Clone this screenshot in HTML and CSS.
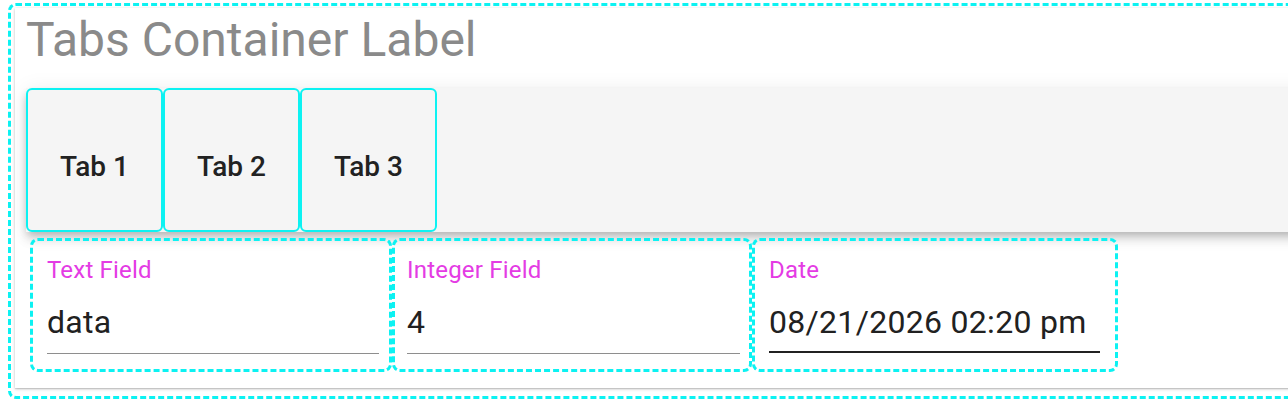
FILE: index.html
```html
<!DOCTYPE html>
<html>
<head>
<meta charset="utf-8">
<link rel="stylesheet" href="styles.css">
</head>
<body>
<div class="outer">
  <div class="paper">
    <div class="title">Tabs Container Label</div>
    <div class="tabbar">
      <div class="tab">Tab 1</div>
      <div class="tab">Tab 2</div>
      <div class="tab">Tab 3</div>
    </div>
    <div class="fields">
      <div class="field f-text">
        <div class="label">Text Field</div>
        <div class="value">data</div>
      </div>
      <div class="field f-int">
        <div class="label">Integer Field</div>
        <div class="value">4</div>
      </div>
      <div class="field f-date">
        <div class="label">Date</div>
        <div class="value value-date">08/21/2026 02:20 pm</div>
      </div>
    </div>
  </div>
</div>
</body>
</html>
```
FILE: styles.css
```css
html, body {
  margin: 0;
  padding: 0;
  overflow: hidden;
  background: #ffffff;
  font-family: Roboto, "Liberation Sans", sans-serif;
}

.outer {
  box-sizing: border-box;
  margin: 3px 0 0 8px;
  width: 1330px;
  height: 396px;
  border: 3px dashed #0cf2f2;
  border-radius: 8px;
  padding: 2px 0 8px 4px;
}

.paper {
  box-sizing: border-box;
  height: 100%;
  background: #ffffff;
  box-shadow: 0 1px 3px rgba(0, 0, 0, 0.22), 0 1px 1px rgba(0, 0, 0, 0.1);
  padding: 4px 0 0 11px;
}

.title {
  font-size: 48px;
  line-height: 56px;
  color: #8a8a8a;
  margin-bottom: 20px;
  white-space: nowrap;
}

.tabbar {
  display: flex;
  height: 144px;
  background: #f5f5f5;
  box-shadow: 0 4px 8px -2px rgba(0, 0, 0, 0.2), 0 8px 10px 0 rgba(0, 0, 0, 0.1), 0 2px 20px 0 rgba(0, 0, 0, 0.08);
}

.tab {
  box-sizing: border-box;
  width: 137px;
  height: 144px;
  border: 2px solid #0cf2f2;
  border-radius: 6px;
  display: flex;
  align-items: center;
  justify-content: center;
  padding-top: 12px;
  font-size: 28px;
  font-weight: 500;
  color: #222222;
}

.fields {
  display: flex;
  margin: 6px 0 0 4px;
}

.field {
  box-sizing: border-box;
  border: 3px dashed #0cf2f2;
  border-radius: 8px;
  padding: 15px 10px 15px 14px;
}

.f-text { width: 362px; }
.f-int { width: 360px; padding-left: 12px; padding-right: 9px; }
.f-date { width: 366px; padding-right: 15px; }

.label {
  font-size: 24px;
  line-height: 28px;
  color: #e43be4;
  margin-bottom: 19px;
  letter-spacing: 0.2px;
  white-space: nowrap;
}

.value {
  font-size: 32px;
  line-height: 38px;
  color: #212121;
  letter-spacing: 0.3px;
  padding-bottom: 12px;
  border-bottom: 1px solid #8e8e8e;
  white-space: nowrap;
}

.value-date {
  padding-bottom: 10px;
  border-bottom: 2px solid #212121;
}
```
